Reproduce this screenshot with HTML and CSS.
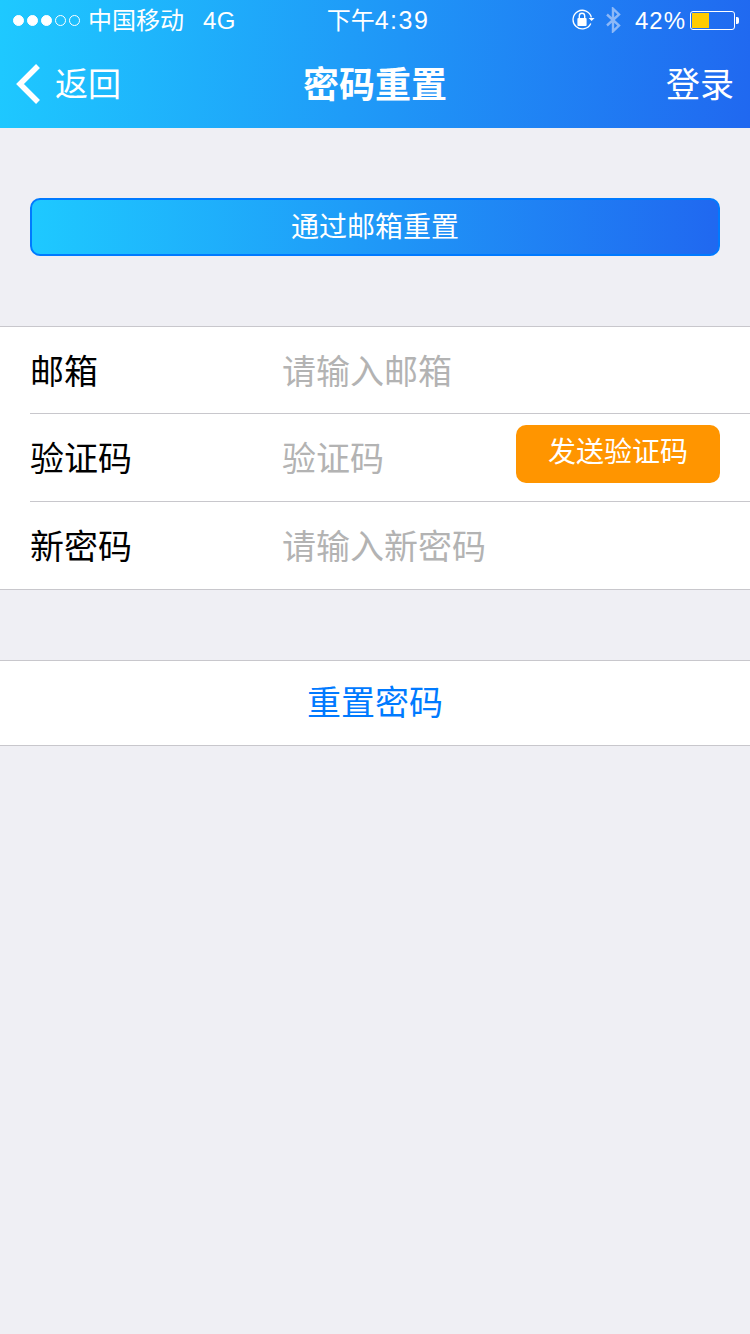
FILE: index.html
```html
<html>
  <head>
    <meta charset="utf-8">
    <link rel="stylesheet" href="styles.css">
    <title>密码重置</title>
  </head>
  <body>
    <header class="top-bar">
      <div class="status-bar">
        <div class="status-left">
          <span class="signal">
            <i class="dot on"></i><i class="dot on"></i><i class="dot on"></i><i class="dot"></i><i class="dot"></i>
          </span>
          <span class="carrier">中国移动</span>
          <span class="network">4G</span>
        </div>
        <div class="status-time"><span class="time-cn">下午</span>4:39</div>
        <div class="status-right">
          <svg class="lock-icon" width="24" height="22" viewBox="0 0 24 22">
            <path d="M18.8 14.500A9.300 9.300 0 1 1 19.400 8.500" fill="none" stroke="#fff" stroke-width="1.300"/>
            <path d="M16.600 9h6l-3 3z" fill="#fff"/>
            <rect x="5.400" y="9" width="9.200" height="8" rx="1" fill="#fff"/>
            <path d="M7.300 9.500V7a2.700 2.700 0 0 1 5.400 0v2.500" fill="none" stroke="#fff" stroke-width="1.400"/>
          </svg>
          <svg class="bt-icon" width="16" height="26" viewBox="0 0 16 26">
            <path d="M2 7.500l12 11-6 5.800V1.700l6 5.800-12 11" fill="none" stroke="#8db8f7" stroke-width="2.400"/>
          </svg>
          <span class="battery-text">42%</span>
          <span class="battery"><span class="battery-level"></span></span>
          <span class="battery-tip"></span>
        </div>
      </div>
      <nav class="nav-bar">
        <div class="nav-back">
          <svg width="26" height="42" viewBox="0 0 26 42">
            <path d="M22 3L4 21l18 18" fill="none" stroke="#fff" stroke-width="5.500"/>
          </svg>
          <span>返回</span>
        </div>
        <h1 class="nav-title">密码重置</h1>
        <div class="nav-login">登录</div>
      </nav>
    </header>

    <div class="switch-wrap">
      <button class="switch-btn">通过邮箱重置</button>
    </div>

    <section class="form-list">
      <div class="row">
        <span class="label">邮箱</span>
        <span class="placeholder">请输入邮箱</span>
      </div>
      <div class="row">
        <span class="label">验证码</span>
        <span class="placeholder">验证码</span>
        <button class="send-btn">发送验证码</button>
      </div>
      <div class="row">
        <span class="label">新密码</span>
        <span class="placeholder">请输入新密码</span>
      </div>
    </section>

    <section class="reset-row">重置密码</section>
  </body>
</html>
```

FILE: styles.css
```css
html, body {
  margin: 0;
  padding: 0;
}

body {
  width: 750px;
  height: 1334px;
  overflow: hidden;
  background-color: #efeff4;
  font-family: "Liberation Sans", "Noto Sans CJK SC", sans-serif;
}

.top-bar {
  height: 128px;
  color: #fff;
  background: linear-gradient(95deg, #1ec9ff 0%, #2068f0 100%);
}

/* status bar */
.status-bar {
  height: 40px;
  display: flex;
  align-items: center;
  justify-content: space-between;
  padding: 0 11px 0 13px;
  font-size: 24px;
}

.status-left, .status-right {
  width: 240px;
  display: flex;
  align-items: center;
}

.status-right {
  justify-content: flex-end;
}

.signal {
  display: flex;
  gap: 3px;
  margin-right: 8px;
}

.dot {
  width: 9px;
  height: 9px;
  border: 1px solid #fff;
  border-radius: 50%;
}

.dot.on {
  background-color: #fff;
}

.carrier {
  margin-bottom: 4px;
}

.network {
  margin: 2px 0 0 19px;
  letter-spacing: 0.500px;
}

.status-time {
  margin: 0 0 4px 4px;
  font-size: 25px;
  letter-spacing: 1.500px;
}

.time-cn {
  font-size: 24px;
  letter-spacing: 0;
}

.lock-icon {
  margin-right: 9px;
}

.bt-icon {
  margin-right: 14px;
}

.battery-text {
  letter-spacing: 1px;
  margin: 2px 4px 0 0;
}

.battery {
  width: 45px;
  height: 19px;
  box-sizing: border-box;
  border: 1px solid #fff;
  border-radius: 3px;
  padding: 1px;
}

.battery-level {
  display: block;
  width: 17px;
  height: 15px;
  background-color: #ffcc00;
}

.battery-tip {
  width: 3px;
  height: 7px;
  margin-left: 1px;
  background-color: #fff;
  border-radius: 0 2px 2px 0;
}

/* nav */
.nav-bar {
  height: 88px;
  display: flex;
  align-items: center;
  justify-content: space-between;
  padding: 0 16px;
  font-size: 34px;
}

.nav-back, .nav-login {
  width: 200px;
  display: flex;
  align-items: center;
}

.nav-back span, .nav-login, .nav-title {
  margin-bottom: 4px;
}

.nav-back span {
  font-size: 33px;
}

.nav-back svg {
  margin-right: 13px;
}

.nav-login {
  justify-content: flex-end;
}

.nav-title {
  margin-top: 0;
  font-size: 36px;
  font-weight: bold;
}

/* page */
.switch-wrap {
  padding: 70px 30px;
}

.switch-btn {
  display: block;
  width: 100%;
  height: 58px;
  padding: 0 0 4px;
  border: 2px solid #007aff;
  border-radius: 10px;
  color: #fff;
  font-family: inherit;
  font-size: 28px;
  background: linear-gradient(90deg, #1ec9ff 0%, #2068f0 100%);
}

.form-list {
  background-color: #fff;
  border-top: 1px solid #c8c7cc;
  border-bottom: 1px solid #c8c7cc;
  padding-left: 30px;
}

.row {
  height: 88px;
  box-sizing: border-box;
  padding-bottom: 2px;
  display: flex;
  align-items: center;
  font-size: 34px;
  color: #000;
  border-bottom: 1px solid #c8c7cc;
}

.row:first-child {
  height: 87px;
}

.row:last-child {
  height: 87px;
  border-bottom: none;
}

.label {
  width: 252px;
}

.placeholder {
  color: #b3b3b3;
}

.send-btn {
  align-self: flex-start;
  width: 204px;
  height: 58px;
  margin: 11px 30px 0 auto;
  padding: 0 0 8px;
  border: none;
  border-radius: 10px;
  color: #fff;
  font-family: inherit;
  font-size: 28px;
  background-color: #ff9500;
}

.reset-row {
  height: 86px;
  box-sizing: border-box;
  margin-top: 70px;
  padding-bottom: 6px;
  display: flex;
  align-items: center;
  justify-content: center;
  color: #007aff;
  font-size: 34px;
  background-color: #fff;
  border-top: 1px solid #c8c7cc;
  border-bottom: 1px solid #c8c7cc;
}
```
